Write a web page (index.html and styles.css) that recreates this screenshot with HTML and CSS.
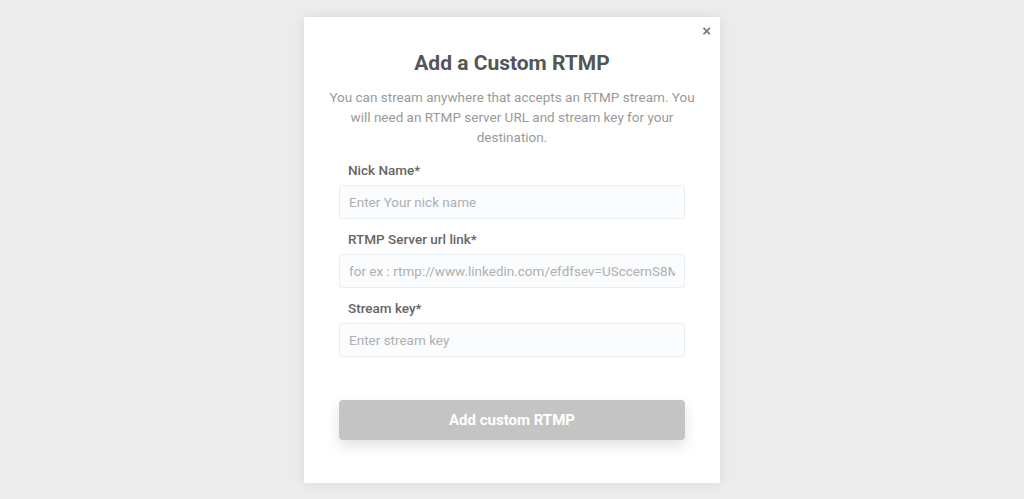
FILE: index.html
```html
<!DOCTYPE html>
<html>
<head>
    <title>Add a Custom RTMP</title>
    <link rel="stylesheet" href="styles.css">
</head>
<body>
    <div class="overlay">
        <div class="modal">
            <button class="close" type="button">&times;</button>
            <h1>Add a Custom RTMP</h1>
            <p class="desc">You can stream anywhere that accepts an RTMP stream. You will need an RTMP server URL and stream key for your destination.</p>
            <form class="rtmp-form">
                <label for="nick">Nick Name*</label>
                <input type="text" id="nick" placeholder="Enter Your nick name">
                <label for="server">RTMP Server url link*</label>
                <input type="text" id="server" placeholder="for ex : rtmp://www.linkedin.com/efdfsev=USccernS8MC9">
                <label for="key">Stream key*</label>
                <input type="text" id="key" placeholder="Enter stream key">
                <button class="submit" type="button">Add custom RTMP</button>
            </form>
        </div>
    </div>
</body>
</html>
```

FILE: styles.css
```css
body {
    margin: 0;
    font-family: Roboto, "Liberation Sans", sans-serif;
    background-color: #ececec;
}

.overlay {
    display: flex;
    justify-content: center;
    padding-top: 17px;
    height: 482px;
}

.modal {
    position: relative;
    box-sizing: border-box;
    width: 416px;
    height: 466px;
    background-color: #fff;
    padding: 33px 22px 0;
    box-shadow: 0 0 12px rgba(0, 0, 0, 0.08);
}

.close {
    position: absolute;
    top: 6px;
    right: 5px;
    border: none;
    background: none;
    font-family: Arial, sans-serif;
    font-size: 15px;
    font-weight: bold;
    line-height: 15px;
    color: #777;
    padding: 0 4px;
    cursor: pointer;
}

h1 {
    margin: 0;
    text-align: center;
    font-size: 21px;
    line-height: 26px;
    font-weight: bold;
    color: #555;
}

.desc {
    margin: 11px 0 0;
    text-align: center;
    font-size: 13.5px;
    line-height: 20px;
    color: #9a9a9a;
}

.rtmp-form {
    display: flex;
    flex-direction: column;
    padding: 0 13px;
    margin-top: 13px;
}

label {
    display: block;
    padding-left: 9px;
    font-size: 13.5px;
    line-height: 20px;
    font-weight: 500;
    color: #666;
}

input[type="text"] {
    box-sizing: border-box;
    height: 34px;
    margin: 5px 0 10px;
    padding: 0 9px;
    border: 1px solid #e9eef3;
    border-radius: 3px;
    background-color: #fafcfe;
    font-family: inherit;
    font-size: 13.5px;
    color: #555;
}

input[type="text"]::placeholder {
    color: #b0b0b0;
}

.submit {
    margin-top: 33px;
    height: 40px;
    border: none;
    border-radius: 4px;
    background-color: #c4c4c4;
    color: #fff;
    font-family: inherit;
    font-size: 15px;
    font-weight: bold;
    box-shadow: 0 6px 14px rgba(0, 0, 0, 0.12);
    cursor: pointer;
}
```
